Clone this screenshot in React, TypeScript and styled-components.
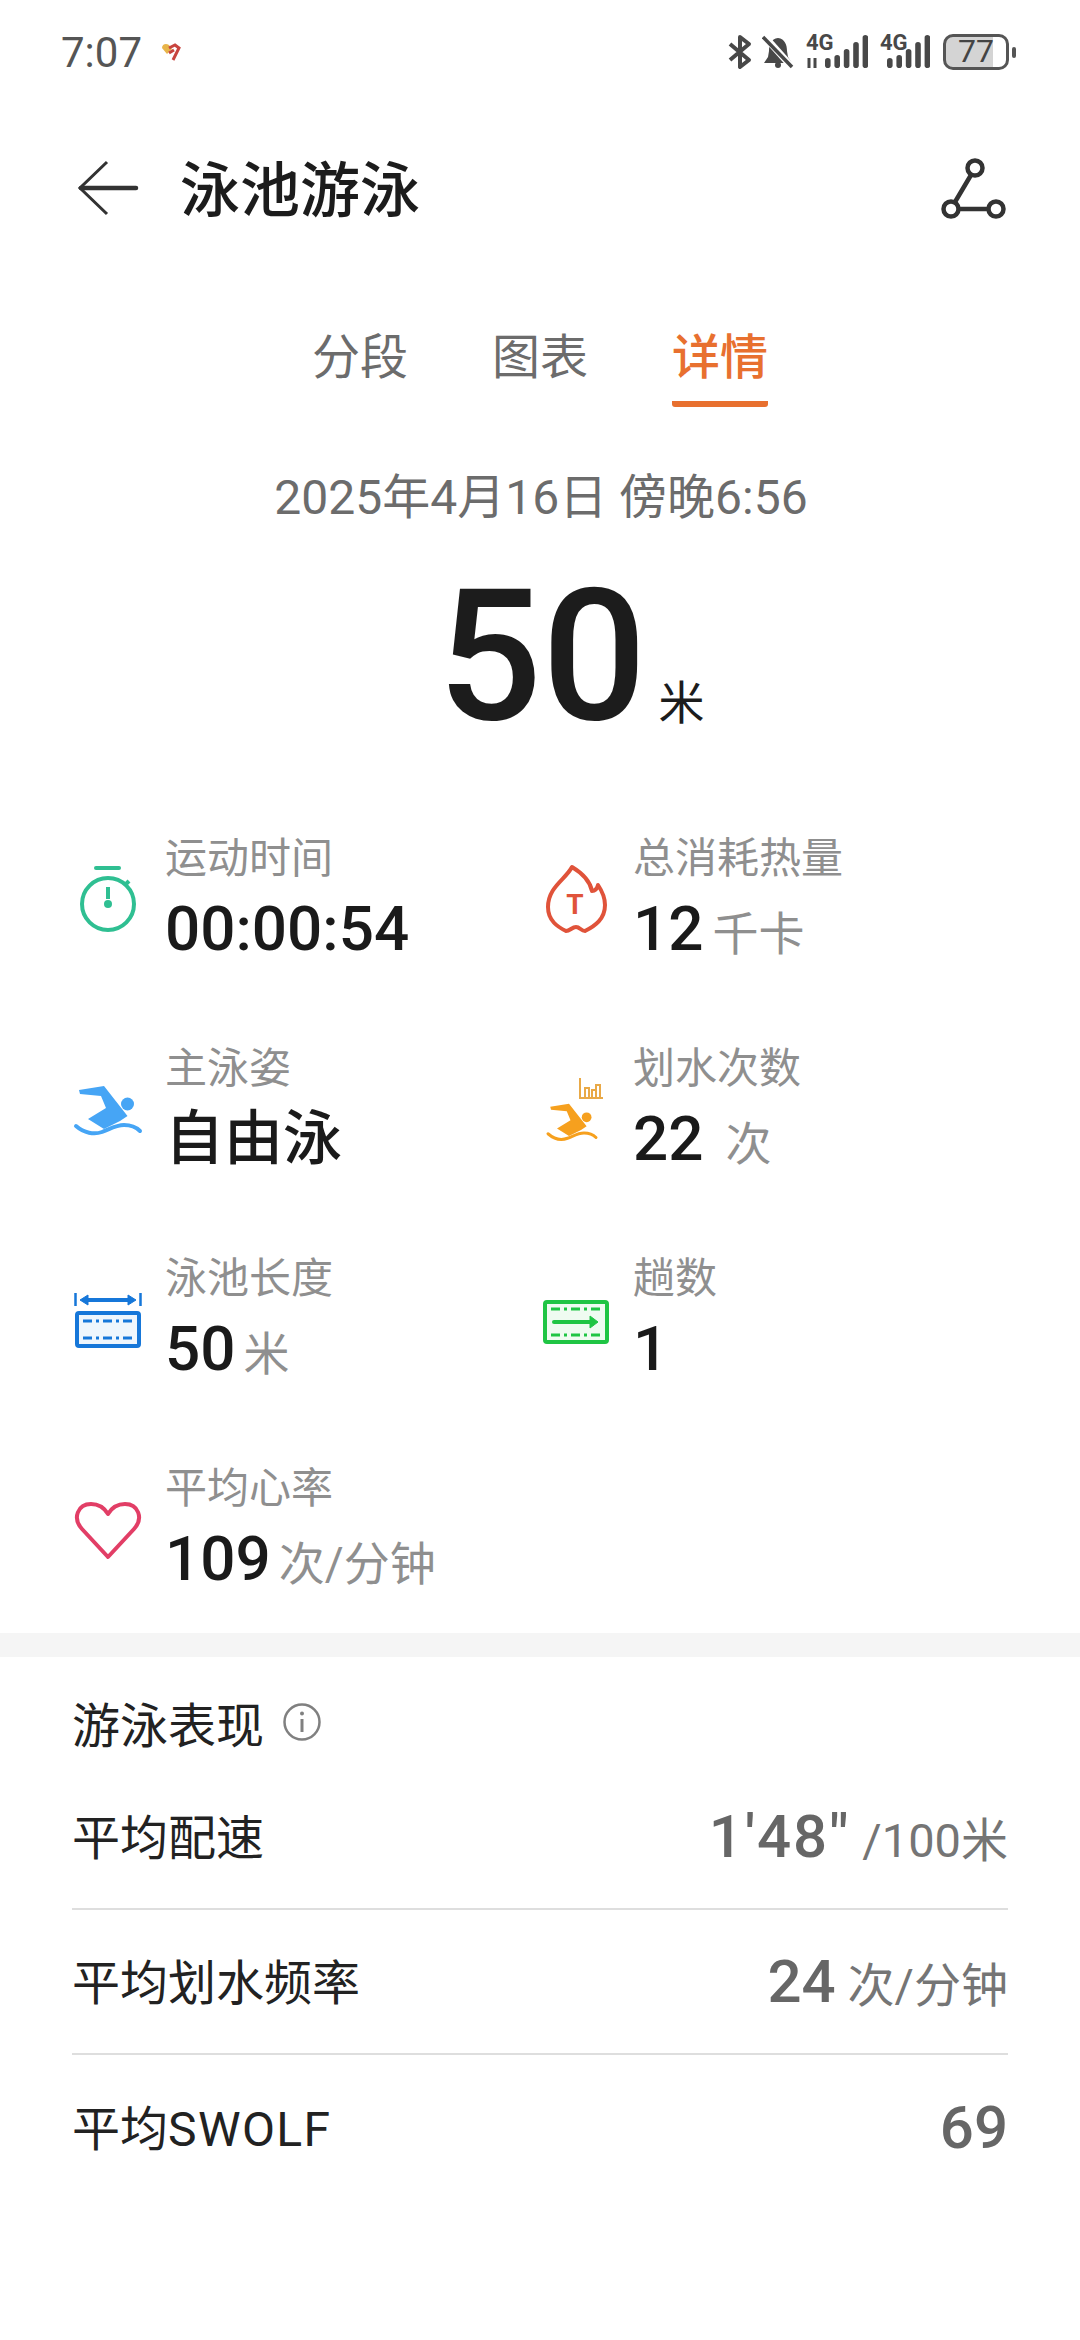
import React from 'react'
import styled, { createGlobalStyle } from 'styled-components'

const GlobalStyle = createGlobalStyle`
  html, body {
    margin: 0;
    padding: 0;
    background: #fff;
  }
  body {
    font-family: Roboto, "Noto Sans CJK SC", sans-serif;
  }
`

const Page = styled.div`
  width: 1080px;
  height: 2340px;
  overflow: hidden;
  background: #fff;
  color: #1c1c1c;
`

const StatusBar = styled.div`
  height: 104px;
  display: flex;
  align-items: center;
  padding: 0 64px 0 61px;
  box-sizing: border-box;
`
const Clock = styled.span`
  font-size: 42px;
  color: #555;
  margin-right: 19px;
`
const StatusIcons = styled.div`
  margin-left: auto;
  display: flex;
  align-items: center;
`
const Battery = styled.div`
  width: 66px;
  height: 36px;
  box-sizing: border-box;
  border: 3.5px solid #555;
  border-radius: 10px;
  background: linear-gradient(to right, #d4d4d4 78%, #fff 78%);
  color: #444;
  font-size: 32px;
  line-height: 29px;
  text-align: center;
  margin-left: 13px;
`
const BatteryTip = styled.div`
  width: 4px;
  height: 11px;
  border-radius: 2px;
  background: #555;
  margin-left: 3px;
`

const Header = styled.div`
  height: 168px;
  display: flex;
  align-items: center;
  padding: 0 72px 0 76px;
`
const Title = styled.h1`
  margin: 0 0 6px 40px;
  font-size: 60px;
  font-weight: 500;
  color: #1c1c1c;
`
const RouteButton = styled.svg`
  margin-left: auto;
`

const Tabs = styled.div`
  display: flex;
  justify-content: center;
  gap: 84px;
  padding-top: 54px;
`
const Tab = styled.div<{ $active?: boolean }>`
  font-size: 48px;
  line-height: 64px;
  font-weight: ${p => (p.$active ? 500 : 400)};
  color: ${p => (p.$active ? '#e8702f' : '#6c6c6c')};
  padding-bottom: 11px;
  border-bottom: 6px solid ${p => (p.$active ? '#e8702f' : 'transparent')};
  border-radius: 3px;
`

const DateLine = styled.div`
  text-align: center;
  font-size: 48px;
  line-height: 64px;
  color: #6c6c6c;
  margin-top: 59px;
  padding-left: 2px;
`
const Total = styled.div`
  display: flex;
  justify-content: center;
  align-items: baseline;
  height: 240px;
  padding-left: 62px;
  margin: 6px 0 55px;
  box-sizing: border-box;
`
const TotalValue = styled.span`
  font-size: 184px;
  line-height: 240px;
  font-weight: 500;
  color: #1c1c1c;
`
const TotalUnit = styled.span`
  font-size: 46px;
  color: #1c1c1c;
  margin-left: 12px;
`

const Metrics = styled.div`
  display: grid;
  grid-template-columns: 468px 468px;
  grid-auto-rows: 134px;
  row-gap: 76px;
  padding: 0 72px;
`
const Metric = styled.div`
  display: flex;
`
const MetricIcon = styled.svg`
  flex: none;
  margin-right: -3px;
`
const MetricText = styled.div`
  display: flex;
  flex-direction: column;
`
const MetricLabel = styled.div`
  font-size: 42px;
  line-height: 56px;
  color: #8f8f8f;
`
const MetricValue = styled.div`
  display: flex;
  align-items: baseline;
  margin-top: 6px;
  line-height: 72px;
`
const MetricNumber = styled.span<{ $cjk?: boolean }>`
  font-size: ${p => (p.$cjk ? 59 : 62)}px;
  font-weight: 500;
  color: #1a1a1a;
`
const MetricUnit = styled.span<{ $gap: number }>`
  font-size: 46px;
  color: #8f8f8f;
  margin-left: ${p => p.$gap}px;
`

const Band = styled.div`
  height: 24px;
  background: #f5f5f5;
  margin-top: 38px;
`

const Section = styled.div`
  padding: 22px 72px 0;
`
const SectionTitle = styled.div`
  height: 86px;
  display: flex;
  align-items: center;
  gap: 18px;
  font-size: 48px;
  color: #222;
`
const PerfRow = styled.div<{ $last?: boolean }>`
  height: 145px;
  box-sizing: border-box;
  display: flex;
  align-items: center;
  justify-content: space-between;
  font-size: 48px;
  color: #222;
  border-bottom: ${p => (p.$last ? 'none' : '2px solid #dedede')};
`
const PerfLabel = styled.span`
  margin-bottom: 5px;
`
const Latin = styled.span`
  letter-spacing: 1.4px;
`
const PerfValue = styled.div`
  display: flex;
  align-items: baseline;
`
const PerfNumber = styled.span<{ $tracking?: number }>`
  font-size: 60px;
  font-weight: 500;
  color: #666;
  letter-spacing: ${p => p.$tracking ?? 0}px;
`
const PerfUnit = styled.span`
  font-size: 47px;
  color: #757575;
  margin-left: 12px;
`

const Bluetooth = () => (
  <svg width="26" height="36" viewBox="0 0 26 36" fill="none" stroke="#484848" strokeWidth="4" strokeLinejoin="round">
    <path d="M3 10 L22 26 L13 33 V3 L22 10 L3 26" />
  </svg>
)

const BellOff = () => (
  <svg width="32" height="34" viewBox="0 0 32 34" style={{ marginLeft: 9 }}>
    <path fill="#484848" d="M16 3 C9 4 7 10 7 16 L6 22 L2 28 H30 L26 22 L25 16 C25 10 23 4 16 3 Z" />
    <circle cx="16" cy="30" r="3" fill="#484848" />
    <path d="M3 2 L29 31" stroke="#fff" strokeWidth="7" />
    <path d="M1 2 L30 32" stroke="#484848" strokeWidth="3.5" />
  </svg>
)

const Signal = ({ arrows }: { arrows?: boolean }) => {
  const width = arrows ? 62 : 50
  return (
    <svg width={width} height="44" viewBox={`0 -4 ${width} 44`} style={{ marginLeft: 12 }}>
      <text x="0" y="16" fontSize="22" fontWeight="700" fill="#484848" fontFamily="Roboto, sans-serif">4G</text>
      {arrows && <path d="M3 34 V24 M9 24 V34" stroke="#484848" strokeWidth="3" />}
      {[0, 1, 2, 3, 4].map(i => (
        <rect key={i} x={(arrows ? 19 : 7) + i * 9.4} y={[24, 21, 15, 8, 1][i]} width="5.6" height={[10, 13, 19, 26, 33][i]} rx="2.8" fill="#484848" />
      ))}
    </svg>
  )
}

const stopwatch = (
  <g fill="none" stroke="#2fbf92" strokeWidth="4">
    <circle cx="36" cy="73" r="26" />
    <path d="M24 37 H47" strokeLinecap="round" />
    <path d="M36 56 V68" />
    <path d="M54 53 L57 50" />
    <circle cx="36" cy="73" r="4" fill="#2fbf92" stroke="none" />
  </g>
)

const flame = (
  <g>
    <path fill="none" stroke="#e0533a" strokeWidth="4" strokeLinejoin="round" d="M32 36 C26 48 8 56 8 76 C8 90 18 96 26 100 C30 100 32 96 36 96 C40 96 41 100 45 100 C55 95 65 88 65 74 C65 66 62 60 58 54 C57 58 55 60 52 60 C50 50 42 42 32 36 Z" />
    <text x="35" y="83" textAnchor="middle" fontSize="28" fontWeight="700" fill="#e0533a" fontFamily="Roboto, sans-serif">T</text>
  </g>
)

const swimmer = (color: string) => (
  <g>
    <path fill={color} d="M7 49 L32 45 L55.5 75 L48 80 L32 88 L16 78 L34 67 L29 55 L8 53 Z" />
    <circle cx="55.5" cy="63" r="6.5" fill={color} />
    <path fill="none" stroke={color} strokeWidth="4" strokeLinecap="round" d="M4 85 C12 92 22 94 30 91 C38 88 44 84 52 84 C58 84 64 86 68 90" />
  </g>
)

const strokes = (
  <g>
    <g transform="translate(5 29) scale(0.75)">{swimmer('#f6a01e')}</g>
    <path fill="none" stroke="#e9a947" strokeWidth="2" d="M40 37 V57 H63 M45 57 V47 H49 V57 M52 57 V49 H56 V57 M56 57 V44 H60 V57" />
  </g>
)

const poolLength = (
  <g fill="none" stroke="#1677d9">
    <path d="M3.5 42 V55 M68.5 42 V55" strokeWidth="2.5" />
    <path d="M12 49 H60" strokeWidth="4" />
    <path d="M8 49 L16 44 V54 Z M64 49 L56 44 V54 Z" fill="#1677d9" strokeWidth="1" />
    <rect x="5" y="62" width="62" height="33" rx="2" strokeWidth="4" fill="#eef6fd" />
    <path d="M11 70 H62 M11 87 H62" strokeWidth="3" strokeDasharray="9 4 3 4" />
  </g>
)

const laps = (
  <g fill="none" stroke="#1fc544">
    <rect x="5" y="51" width="62" height="40" rx="2" strokeWidth="4" fill="#effbf1" />
    <path d="M11 58 H62 M11 84 H62" strokeWidth="3" strokeDasharray="9 4 3 4" />
    <path d="M14 71 H50" strokeWidth="4" strokeLinecap="round" />
    <path d="M50 65 L58 71 L50 77 Z" fill="#1fc544" strokeWidth="1" />
  </g>
)

const heart = (
  <path fill="none" stroke="#e23e66" strokeWidth="4" strokeLinejoin="round" d="M36 96 L10 68 C0 57 6 43 19 43 C27 43 33 48 36 53 C39 48 45 43 53 43 C66 43 72 57 62 68 Z" />
)

type MetricItem = { icon: React.ReactNode; label: string; value: string; cjk?: boolean; unit?: string; gap?: number }

const metrics: MetricItem[] = [
  { icon: stopwatch, label: '运动时间', value: '00:00:54' },
  { icon: flame, label: '总消耗热量', value: '12', unit: '千卡', gap: 9 },
  { icon: swimmer('#46a5f5'), label: '主泳姿', value: '自由泳', cjk: true },
  { icon: strokes, label: '划水次数', value: '22', unit: '次', gap: 22 },
  { icon: poolLength, label: '泳池长度', value: '50', unit: '米', gap: 8 },
  { icon: laps, label: '趟数', value: '1' },
  { icon: heart, label: '平均心率', value: '109', unit: '次/分钟', gap: 8 },
]

const performance: { label: React.ReactNode; value: string; unit?: string; tracking?: number }[] = [
  { label: '平均配速', value: `1'48"`, unit: '/100米', tracking: 2 },
  { label: '平均划水频率', value: '24', unit: '次/分钟' },
  { label: <>平均<Latin>SWOLF</Latin></>, value: '69' },
]

export default function App() {
  return (
    <Page lang="zh-CN">
      <GlobalStyle />
      <StatusBar>
        <Clock>7:07</Clock>
        <svg width="20" height="19" viewBox="0 0 20 19">
          <path fill="#e8b54a" d="M1 5 C1 1 5 0 8 2 L11 6 L6 11 Z" />
          <path fill="none" stroke="#c8443f" strokeWidth="3" d="M8 5 L14 2 L18 5 L12 17 M8 10 L13 7" />
        </svg>
        <StatusIcons>
          <Bluetooth />
          <BellOff />
          <Signal arrows />
          <Signal />
          <Battery>77</Battery>
          <BatteryTip />
        </StatusIcons>
      </StatusBar>

      <Header>
        <svg width="64" height="56" viewBox="0 0 64 56" fill="none" stroke="#333">
          <path d="M31 2 L4 28 L31 54" strokeWidth="3" />
          <path d="M5 28 H60" strokeWidth="4.5" strokeLinecap="round" />
        </svg>
        <Title>泳池游泳</Title>
        <RouteButton width="68" height="62" viewBox="0 0 68 62" fill="none" stroke="#333" strokeWidth="4.5">
          <circle cx="35" cy="11" r="7.5" />
          <circle cx="11" cy="52" r="7.5" />
          <circle cx="56" cy="52" r="7.5" />
          <path d="M31 18 L15 45 M19 52 H48" />
        </RouteButton>
      </Header>

      <Tabs>
        <Tab>分段</Tab>
        <Tab>图表</Tab>
        <Tab $active>详情</Tab>
      </Tabs>

      <DateLine>2025年4月16日 傍晚6:56</DateLine>

      <Total>
        <TotalValue>50</TotalValue>
        <TotalUnit>米</TotalUnit>
      </Total>

      <Metrics>
        {metrics.map(m => (
          <Metric key={m.label}>
            <MetricIcon width="96" height="134" viewBox="0 0 96 134">{m.icon}</MetricIcon>
            <MetricText>
              <MetricLabel>{m.label}</MetricLabel>
              <MetricValue>
                <MetricNumber $cjk={m.cjk}>{m.value}</MetricNumber>
                {m.unit && <MetricUnit $gap={m.gap ?? 8}>{m.unit}</MetricUnit>}
              </MetricValue>
            </MetricText>
          </Metric>
        ))}
      </Metrics>

      <Band />

      <Section>
        <SectionTitle>
          游泳表现
          <svg width="40" height="40" viewBox="0 0 40 40" fill="none" stroke="#808080">
            <circle cx="20" cy="20" r="17.5" strokeWidth="2.5" />
            <path d="M20 17 V30" strokeWidth="3" />
            <circle cx="20" cy="11.5" r="2" fill="#808080" stroke="none" />
          </svg>
        </SectionTitle>
        {performance.map((r, i) => (
          <PerfRow key={i} $last={i === performance.length - 1}>
            <PerfLabel>{r.label}</PerfLabel>
            <PerfValue>
              <PerfNumber $tracking={r.tracking}>{r.value}</PerfNumber>
              {r.unit && <PerfUnit>{r.unit}</PerfUnit>}
            </PerfValue>
          </PerfRow>
        ))}
      </Section>
    </Page>
  )
}
